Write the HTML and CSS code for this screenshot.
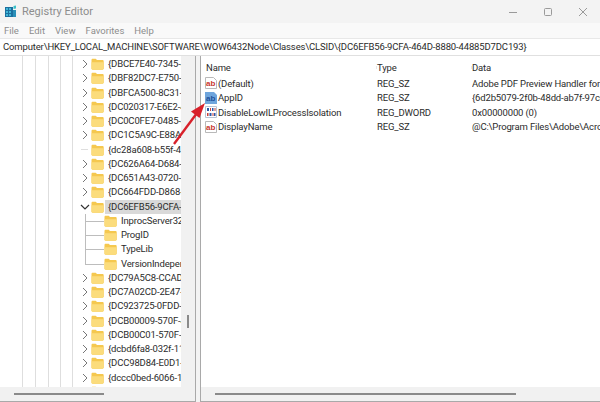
FILE: index.html
```html
<!DOCTYPE html>
<html lang="en">
  <head>
    <meta charset="UTF-8">
    <meta name="viewport" content="width=device-width, initial-scale=1.0">
    <title>Registry Editor</title>
    <link rel="stylesheet" href="styles.css">
  </head>
  <body>
    <svg class="icon-defs" width="0" height="0" aria-hidden="true">
      <symbol id="folder" viewBox="0 0 13 12">
        <path d="M0.5 2c0-.8.5-1.3 1.2-1.3h3l1.3 1.3h5.5c.7 0 1.2.5 1.2 1.2v7.3c0 .7-.5 1.2-1.2 1.2H1.7c-.7 0-1.2-.5-1.2-1.2z" fill="#f5c84f"/>
        <path d="M0.5 4.2h12v6.3c0 .7-.5 1.2-1.2 1.2H1.7c-.7 0-1.2-.5-1.2-1.2z" fill="#fbdc7c"/>
      </symbol>
      <symbol id="chev-right" viewBox="0 0 8 10">
        <path d="M2 1l4 4-4 4" fill="none" stroke="#777" stroke-width="1"/>
      </symbol>
      <symbol id="chev-down" viewBox="0 0 10 8">
        <path d="M1 2l4 4 4-4" fill="none" stroke="#333" stroke-width="1.2"/>
      </symbol>
      <symbol id="val-str" viewBox="0 0 12 12">
        <path d="M.5 .5h8l3 3v8H.5z" fill="#fff" stroke="#b9b9b9"/>
        <text x="1" y="8.500" class="val-glyph">ab</text>
      </symbol>
      <symbol id="val-str-selected" viewBox="0 0 12 12">
        <path d="M0 0h9l3 3v9H0z" fill="#6fa5dc"/>
        <text x="1" y="8.500" class="val-glyph val-glyph--selected">ab</text>
      </symbol>
      <symbol id="val-num" viewBox="0 0 12 12">
        <path d="M.5 .5h11v11H.5z" fill="#fff" stroke="#b9c4d6"/>
        <path d="M2 2h2v3H2zM7 2h1.500v3H7zM4.500 7h2v3h-2zM9 7h1.500v3H9z" fill="#2a57a8"/>
        <path d="M5 2h1v3H5zM9.500 2h1v3h-1zM2 7h1.500v3H2zM7.500 7h1v3h-1z" fill="#c8413a"/>
      </symbol>
    </svg>

    <main class="window">
      <header class="titlebar">
        <svg class="titlebar__logo" width="13" height="13" viewBox="0 0 13 13" aria-hidden="true">
          <path d="M1 2h8v10H1z" fill="#1c6f9e"/>
          <path d="M2 3h2v2H2zM5 3h2v2H5zM2 6h2v2H2zM5 6h2v2H5zM2 9h2v2H2zM5 9h2v2H5z" fill="#3fb6d8"/>
          <path d="M9 5h3v7H9z" fill="#2a8fb8"/>
          <path d="M9.500 1l2.500-.5v3l-2.500.5z" fill="#39c0c8"/>
        </svg>
        <span class="titlebar__title">Registry Editor</span>
        <div class="titlebar__controls">
          <svg width="10" height="10" viewBox="0 0 10 10" aria-hidden="true"><path d="M1 5.500h8" stroke="#9a9a9a"/></svg>
          <svg width="10" height="10" viewBox="0 0 10 10" aria-hidden="true"><rect x="1.500" y="1.500" width="7" height="7" rx="1" fill="none" stroke="#9a9a9a"/></svg>
          <svg width="10" height="10" viewBox="0 0 10 10" aria-hidden="true"><path d="M1 1l8 8M9 1l-8 8" stroke="#9a9a9a"/></svg>
        </div>
      </header>

      <nav class="menu">
        <span class="menu__item">File</span>
        <span class="menu__item">Edit</span>
        <span class="menu__item">View</span>
        <span class="menu__item">Favorites</span>
        <span class="menu__item">Help</span>
      </nav>

      <div class="address">Computer\HKEY_LOCAL_MACHINE\SOFTWARE\WOW6432Node\Classes\CLSID\{DC6EFB56-9CFA-464D-8880-44885D7DC193}</div>

      <div class="panes">
        <section class="tree-pane">
          <div class="tree-pane__body">
            <ul class="tree">
              <li class="tree__row"><svg class="tree__chev"><use href="#chev-right"/></svg><svg class="tree__folder"><use href="#folder"/></svg><span class="tree__label">{DBCE7E40-7345-439D</span></li>
              <li class="tree__row"><svg class="tree__chev"><use href="#chev-right"/></svg><svg class="tree__folder"><use href="#folder"/></svg><span class="tree__label">{DBF82DC7-E750-4E5</span></li>
              <li class="tree__row"><svg class="tree__chev"><use href="#chev-right"/></svg><svg class="tree__folder"><use href="#folder"/></svg><span class="tree__label">{DBFCA500-8C31-4D</span></li>
              <li class="tree__row"><svg class="tree__chev"><use href="#chev-right"/></svg><svg class="tree__folder"><use href="#folder"/></svg><span class="tree__label">{DC020317-E6E2-4A6</span></li>
              <li class="tree__row"><svg class="tree__chev"><use href="#chev-right"/></svg><svg class="tree__folder"><use href="#folder"/></svg><span class="tree__label">{DC0C0FE7-0485-4D</span></li>
              <li class="tree__row"><svg class="tree__chev"><use href="#chev-right"/></svg><svg class="tree__folder"><use href="#folder"/></svg><span class="tree__label">{DC1C5A9C-E88A-4D</span></li>
              <li class="tree__row tree__row--leaf"><span class="tree__stub"></span><svg class="tree__folder"><use href="#folder"/></svg><span class="tree__label">{dc28a608-b55f-4a0</span></li>
              <li class="tree__row"><svg class="tree__chev"><use href="#chev-right"/></svg><svg class="tree__folder"><use href="#folder"/></svg><span class="tree__label">{DC626A64-D684-43</span></li>
              <li class="tree__row"><svg class="tree__chev"><use href="#chev-right"/></svg><svg class="tree__folder"><use href="#folder"/></svg><span class="tree__label">{DC651A43-0720-4A</span></li>
              <li class="tree__row"><svg class="tree__chev"><use href="#chev-right"/></svg><svg class="tree__folder"><use href="#folder"/></svg><span class="tree__label">{DC664FDD-D868-46</span></li>
              <li class="tree__row tree__row--open"><svg class="tree__chev"><use href="#chev-down"/></svg><svg class="tree__folder"><use href="#folder"/></svg><span class="tree__label tree__label--selected">{DC6EFB56-9CFA-464D</span></li>
              <li class="tree__row tree__row--child"><span class="tree__branch"></span><svg class="tree__folder"><use href="#folder"/></svg><span class="tree__label">InprocServer32</span></li>
              <li class="tree__row tree__row--child"><span class="tree__branch"></span><svg class="tree__folder"><use href="#folder"/></svg><span class="tree__label">ProgID</span></li>
              <li class="tree__row tree__row--child"><span class="tree__branch"></span><svg class="tree__folder"><use href="#folder"/></svg><span class="tree__label">TypeLib</span></li>
              <li class="tree__row tree__row--child tree__row--last"><span class="tree__branch"></span><svg class="tree__folder"><use href="#folder"/></svg><span class="tree__label">VersionIndependentProgID</span></li>
              <li class="tree__row"><svg class="tree__chev"><use href="#chev-right"/></svg><svg class="tree__folder"><use href="#folder"/></svg><span class="tree__label">{DC79A5C8-CCAD-4</span></li>
              <li class="tree__row"><svg class="tree__chev"><use href="#chev-right"/></svg><svg class="tree__folder"><use href="#folder"/></svg><span class="tree__label">{DC7A02CD-2E47-4D</span></li>
              <li class="tree__row"><svg class="tree__chev"><use href="#chev-right"/></svg><svg class="tree__folder"><use href="#folder"/></svg><span class="tree__label">{DC923725-0FDD-4A</span></li>
              <li class="tree__row"><svg class="tree__chev"><use href="#chev-right"/></svg><svg class="tree__folder"><use href="#folder"/></svg><span class="tree__label">{DCB00009-570F-4A</span></li>
              <li class="tree__row"><svg class="tree__chev"><use href="#chev-right"/></svg><svg class="tree__folder"><use href="#folder"/></svg><span class="tree__label">{DCB00C01-570F-4A</span></li>
              <li class="tree__row"><svg class="tree__chev"><use href="#chev-right"/></svg><svg class="tree__folder"><use href="#folder"/></svg><span class="tree__label">{dcbd6fa8-032f-11d</span></li>
              <li class="tree__row"><svg class="tree__chev"><use href="#chev-right"/></svg><svg class="tree__folder"><use href="#folder"/></svg><span class="tree__label">{DCC98D84-E0D1-4</span></li>
              <li class="tree__row"><svg class="tree__chev"><use href="#chev-right"/></svg><svg class="tree__folder"><use href="#folder"/></svg><span class="tree__label">{dccc0bed-6066-11</span></li>
              <li class="tree__row"><svg class="tree__chev"></svg><svg class="tree__folder"><use href="#folder"/></svg></li>
            </ul>
            <div class="vscroll"><span class="vscroll__thumb"></span></div>
          </div>
          <div class="hscroll hscroll--tree"><span class="hscroll__thumb"></span></div>
        </section>

        <section class="values-pane">
          <div class="values-pane__body">
            <div class="values">
              <div class="values__head">
                <span class="values__name">Name</span>
                <span class="values__type">Type</span>
                <span class="values__data">Data</span>
              </div>
              <div class="values__row">
                <span class="values__name"><svg class="values__icon"><use href="#val-str"/></svg>(Default)</span>
                <span class="values__type">REG_SZ</span>
                <span class="values__data">Adobe PDF Preview Handler for Vista</span>
              </div>
              <div class="values__row">
                <span class="values__name"><svg class="values__icon"><use href="#val-str-selected"/></svg>AppID</span>
                <span class="values__type">REG_SZ</span>
                <span class="values__data">{6d2b5079-2f0b-48dd-ab7f-97cec514d30b}</span>
              </div>
              <div class="values__row">
                <span class="values__name"><svg class="values__icon"><use href="#val-num"/></svg>DisableLowILProcessIsolation</span>
                <span class="values__type">REG_DWORD</span>
                <span class="values__data">0x00000000 (0)</span>
              </div>
              <div class="values__row">
                <span class="values__name"><svg class="values__icon"><use href="#val-str"/></svg>DisplayName</span>
                <span class="values__type">REG_SZ</span>
                <span class="values__data">@C:\Program Files\Adobe\Acrobat DC\Acrobat</span>
              </div>
            </div>
          </div>
          <div class="hscroll hscroll--values"><span class="hscroll__thumb"></span></div>
        </section>
      </div>

      <svg class="callout" width="600" height="402" viewBox="0 0 600 402" aria-hidden="true">
        <path d="M174 144L197 113" stroke="#d8202a" stroke-width="2.400" fill="none"/>
        <path d="M205 103L191 111.500L199.500 118z" fill="#d8202a"/>
      </svg>
    </main>
  </body>
</html>
```

FILE: styles.css
```css
:root {
  --swatch-chrome: #f3f3f3;
  --swatch-menu: #f9f9f9;
  --swatch-line: #a9a9a9;
  --swatch-guide: #dedede;
  --swatch-text: #2b2b2b;
  --swatch-muted: #8d8d8d;

  --font-ui: Roboto, "Noto Sans", Arial, sans-serif;
}

*, *::before, *::after {
  box-sizing: border-box;
}

html, body {
  margin: 0;
  padding: 0;
  height: 100%;
}

.icon-defs {
  display: block;
  position: absolute;
}

.window {
  display: flex;
  flex-direction: column;
  position: relative;
  width: 600px;
  height: 402px;
  overflow: hidden;
  background-color: var(--swatch-chrome);
  font-family: var(--font-ui);
  font-size: 9.500px;
  letter-spacing: -0.150px;
  color: var(--swatch-text);
}

/** Title bar */
.titlebar {
  display: flex;
  align-items: center;
  height: 23px;
  padding: 0 0 0 4px;
  background-color: var(--swatch-chrome);
}

.titlebar__title {
  margin-left: 5px;
  font-size: 11px;
  letter-spacing: 0;
  color: var(--swatch-muted);
}

.titlebar__controls {
  display: flex;
  gap: 25px;
  margin-left: auto;
  padding-right: 12px;
}

/** Menu */
.menu {
  display: flex;
  gap: 10px;
  height: 15px;
  padding-left: 4px;
  align-items: center;
  background-color: var(--swatch-menu);
  color: var(--swatch-muted);
  font-size: 9.500px;
  letter-spacing: 0;
}

/** Address bar */
.address {
  height: 18px;
  padding-left: 3px;
  background-color: #fff;
  border-top: 1px solid #e8e8e8;
  border-bottom: 1px solid #e0e0e0;
  line-height: 16px;
  white-space: nowrap;
  overflow: hidden;
}

/** Panes */
.panes {
  display: flex;
  flex: 1;
  min-height: 0;
  gap: 4px;
}

.tree-pane,
.values-pane {
  display: flex;
  flex-direction: column;
  min-width: 0;
  background-color: #fff;
  border: 1px solid var(--swatch-line);
  border-top: 0;
}

.tree-pane {
  width: 196px;
  border-left: 0;
}

.values-pane {
  flex: 1;
  border-right: 0;
}

.tree-pane__body,
.values-pane__body {
  display: flex;
  flex: 1;
  min-height: 0;
  overflow: hidden;
}

/** Key tree. The five ancestor guide lines are drawn as a background. */
.tree {
  flex: 1;
  min-width: 0;
  margin: 0;
  padding: 1px 0 0 0;
  list-style: none;
  overflow: hidden;
  background-image:
    linear-gradient(var(--swatch-guide), var(--swatch-guide)),
    linear-gradient(var(--swatch-guide), var(--swatch-guide)),
    linear-gradient(var(--swatch-guide), var(--swatch-guide)),
    linear-gradient(var(--swatch-guide), var(--swatch-guide)),
    linear-gradient(var(--swatch-guide), var(--swatch-guide));
  background-repeat: no-repeat;
  background-size: 1px 100%;
  background-position: 22px 0, 35px 0, 48px 0, 60px 0, 72px 0;
}

.tree__row {
  display: flex;
  align-items: center;
  position: relative;
  height: 14.250px;
  padding-left: 81px;
  white-space: nowrap;
}

.tree__chev {
  flex: none;
  width: 8px;
  height: 10px;
  margin-right: 2px;
}

.tree__row--open .tree__chev {
  width: 10px;
  height: 8px;
  margin: 0 1px 0 -1px;
}

.tree__stub {
  flex: none;
  width: 7px;
  height: 1px;
  margin: 0 3px 0 0;
  background-color: var(--swatch-guide);
}

.tree__folder {
  flex: none;
  width: 13px;
  height: 12px;
}

.tree__label {
  display: block;
  flex: 1;
  min-width: 0;
  margin-left: 1px;
  padding-left: 3px;
  line-height: 14px;
  overflow: hidden;
}

.tree__label--selected {
  background-color: #d9d9d9;
}

.tree__row--child {
  padding-left: 85px;
}

.tree__branch {
  flex: none;
  align-self: stretch;
  width: 19px;
  background-image:
    linear-gradient(#bdbdbd, #bdbdbd),
    linear-gradient(#bdbdbd, #bdbdbd);
  background-repeat: no-repeat;
  background-size: 1px 100%, 100% 1px;
  background-position: 0 0, 0 7px;
}

.tree__row--last .tree__branch {
  background-size: 1px 8px, 100% 1px;
}

.vscroll {
  flex: none;
  position: relative;
  width: 14px;
  background-color: #f1f1f1;
}

.vscroll__thumb {
  display: block;
  position: absolute;
  top: 259px;
  left: 6px;
  width: 2px;
  height: 13px;
  background-color: #8a8a8a;
}

.hscroll {
  flex: none;
  height: 14px;
  padding-top: 6px;
  background-color: #f1f1f1;
}

.hscroll__thumb {
  display: block;
  height: 2px;
  background-color: #8a8a8a;
}

.hscroll--tree .hscroll__thumb {
  width: 90px;
  margin-left: 14px;
}

.hscroll--values .hscroll__thumb {
  width: 301px;
  margin-left: 14px;
}

/** Values list */
.values {
  flex: 1;
  min-width: 0;
  padding-top: 2px;
}

.values__head,
.values__row {
  display: flex;
  align-items: center;
  white-space: nowrap;
}

.values__head {
  height: 18px;
}

.values__row {
  height: 14.500px;
}

.values__name {
  display: flex;
  align-items: center;
  flex: none;
  width: 176px;
  padding-left: 4px;
}

.values__head .values__name {
  padding-left: 5px;
}

.values__type {
  flex: none;
  width: 95px;
}

.values__head .values__type,
.values__head .values__data {
  box-shadow: -5px 0 0 -4px #e6e6e6;
}

.values__data {
  flex: 1;
  min-width: 0;
  overflow: hidden;
}

.values__icon {
  flex: none;
  width: 12px;
  height: 12px;
  margin-right: 1px;
}

.val-glyph {
  font-family: "Liberation Sans", Arial, sans-serif;
  font-size: 8px;
  font-weight: 700;
  letter-spacing: 0;
  fill: #c8362e;
}

.val-glyph--selected {
  fill: #1f4f98;
}

/* Red annotation arrow sits over the window */
.callout {
  position: absolute;
  top: 0;
  left: 0;
  pointer-events: none;
}
```
